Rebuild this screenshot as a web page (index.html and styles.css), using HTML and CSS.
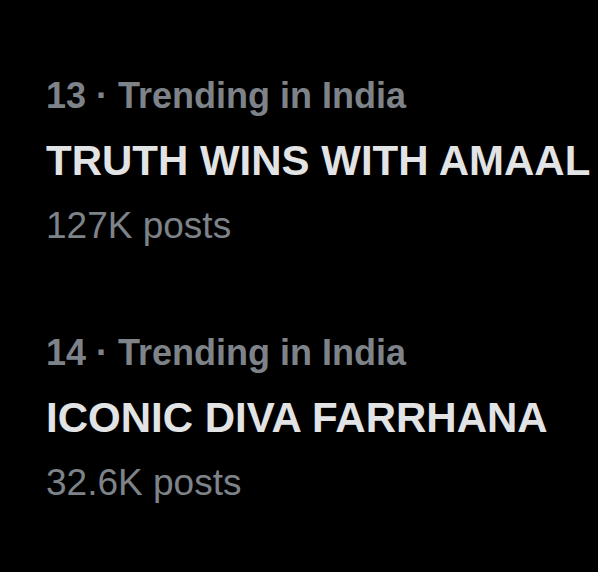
FILE: index.html
```html
<!DOCTYPE html>
<html>
<head>
<meta charset="utf-8">
<link rel="stylesheet" href="styles.css">
</head>
<body>
<div class="list">
  <div class="trend">
    <div class="meta">13 · Trending in India</div>
    <div class="title">TRUTH WINS WITH AMAAL</div>
    <div class="count">127K posts</div>
  </div>
  <div class="trend">
    <div class="meta">14 · Trending in India</div>
    <div class="title">ICONIC DIVA FARRHANA</div>
    <div class="count">32.6K posts</div>
  </div>
</div>
</body>
</html>
```
FILE: styles.css
```css
html, body {
  margin: 0;
  padding: 0;
  background: #000;
}
body {
  width: 598px;
  height: 572px;
  overflow: hidden;
  font-family: "Liberation Sans", Arial, sans-serif;
}
.list {
  display: flex;
  flex-direction: column;
  gap: 62px;
  padding: 63px 0 0 46px;
}
.trend {
  display: flex;
  flex-direction: column;
  white-space: nowrap;
}
.meta {
  font-size: 36px;
  line-height: 65px;
  font-weight: 700;
  color: #7e8389;
}
.title {
  font-size: 42px;
  line-height: 66px;
  font-weight: 700;
  color: #e2e3e4;
}
.count {
  font-size: 37px;
  line-height: 64px;
  font-weight: 400;
  color: #7e8389;
}
```
